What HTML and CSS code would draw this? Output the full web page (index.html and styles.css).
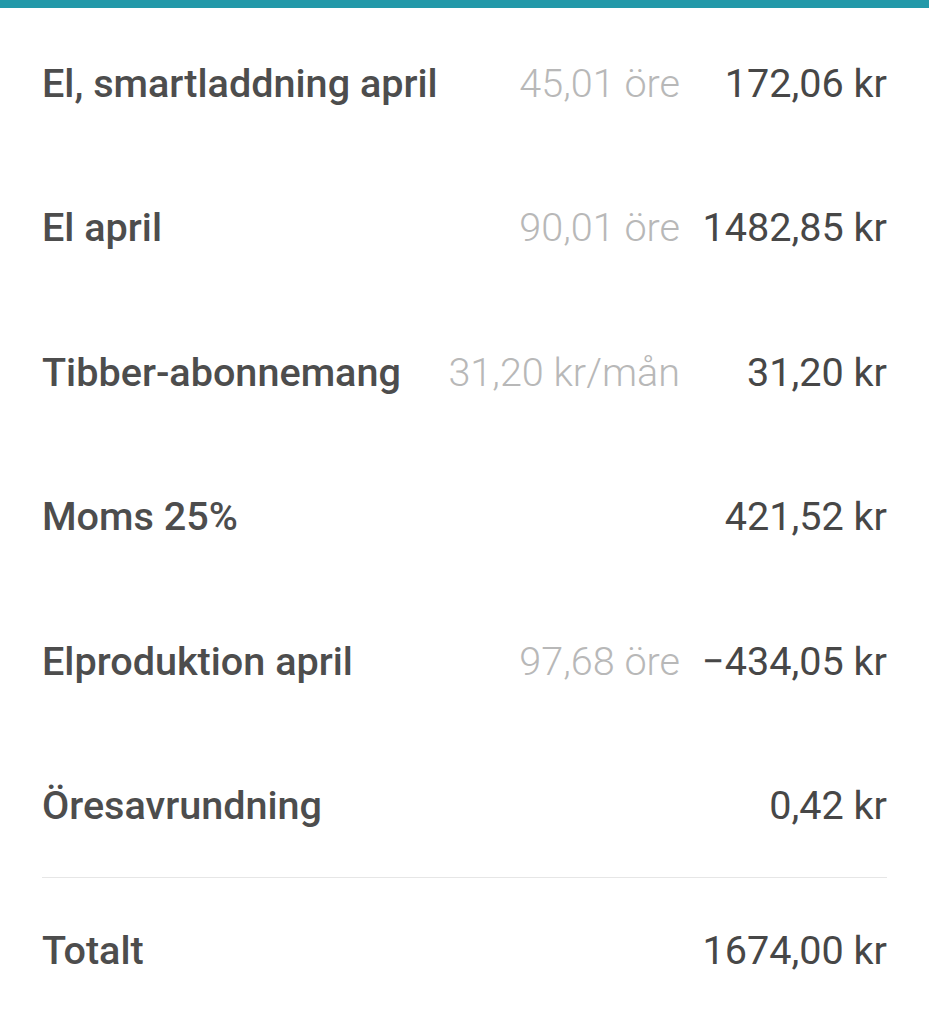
FILE: index.html
```html
<!DOCTYPE html>
<html lang="sv">
<head>
<meta charset="utf-8">
<link rel="stylesheet" href="styles.css">
</head>
<body>
<div class="topbar"></div>
<div class="list">
  <div class="row"><span class="label">El, smartladdning april</span><span class="rate">45,01 öre</span><span class="value">172,06 kr</span></div>
  <div class="row"><span class="label">El april</span><span class="rate">90,01 öre</span><span class="value">1482,85 kr</span></div>
  <div class="row"><span class="label">Tibber-abonnemang</span><span class="rate">31,20 kr/mån</span><span class="value">31,20 kr</span></div>
  <div class="row"><span class="label">Moms 25%</span><span class="rate"></span><span class="value">421,52 kr</span></div>
  <div class="row"><span class="label">Elproduktion april</span><span class="rate">97,68 öre</span><span class="value">−434,05 kr</span></div>
  <div class="row last"><span class="label">Öresavrundning</span><span class="rate"></span><span class="value">0,42 kr</span></div>
  <div class="row total"><span class="label">Totalt</span><span class="rate"></span><span class="value">1674,00 kr</span></div>
</div>
</body>
</html>
```
FILE: styles.css
```css
html, body {
  margin: 0;
  padding: 0;
  background: #ffffff;
}
body {
  font-family: Roboto, "Noto Sans", sans-serif;
  width: 929px;
  height: 1024px;
  overflow: hidden;
}
.topbar {
  height: 8px;
  background: #2399a9;
}
.list {
  padding: 3px 42px 0 42px;
}
.row {
  display: grid;
  grid-template-columns: 1fr auto 207px;
  align-items: center;
  height: 144.5px;
  font-size: 39.6px;
}
.row.last {
  border-bottom: 1px solid #e6e6e6;
  box-sizing: border-box;
}
.label {
  font-weight: 500;
  color: #4d4d4d;
  white-space: nowrap;
}
.rate {
  font-weight: 300;
  color: #b8b8b8;
  text-align: right;
  white-space: nowrap;
}
.value {
  font-weight: 400;
  color: #474747;
  text-align: right;
  white-space: nowrap;
}
```
